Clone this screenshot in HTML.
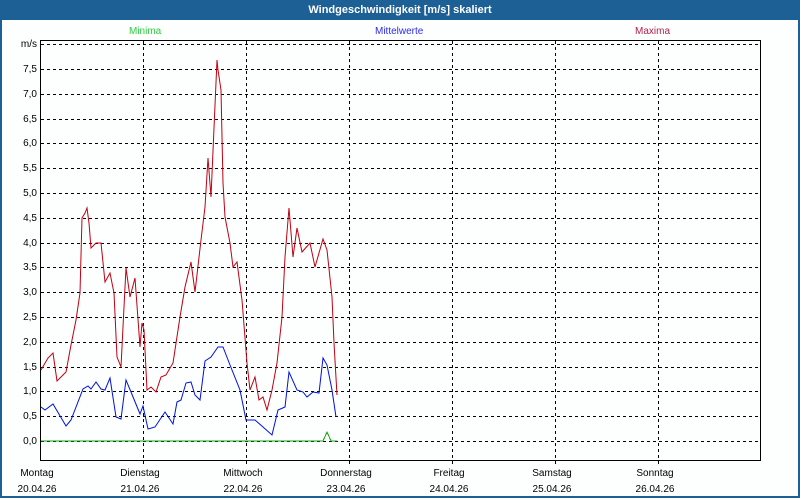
<!DOCTYPE html>
<html><head><meta charset="utf-8"><style>
html,body{margin:0;padding:0}
body{width:800px;height:500px;position:relative;background:#fdfffe;font-family:"Liberation Sans",sans-serif;overflow:hidden}
.frame{position:absolute;left:0;top:0;width:796px;height:496px;border:2px solid #1c6096;border-top:none}
.hdr{position:absolute;left:0;top:0;width:800px;height:20px;background:#1c6096;color:#fff;font-weight:bold;font-size:11px;line-height:20px;text-align:center}
.t{position:absolute;font-size:10px;color:#000;white-space:nowrap}
</style></head><body>
<div class="frame"></div>
<div class="hdr">Windgeschwindigkeit [m/s] skaliert</div>
<div class="t" style="left:129px;top:26px;color:#2ecc40">Minima</div>
<div class="t" style="left:375px;top:26px;color:#2a2af0">Mittelwerte</div>
<div class="t" style="left:635px;top:26px;color:#b0204a">Maxima</div>
<svg width="800" height="500" style="position:absolute;left:0;top:0" shape-rendering="crispEdges">
<g stroke="#000" stroke-width="1" stroke-dasharray="3,3" fill="none" id="grid"></g>
<polyline fill="none" stroke="#1a1" stroke-width="1" points="40,441 323,441 327,432 331,441 337,441"/>
<rect x="40.5" y="40.5" width="720" height="420" fill="none" stroke="#000"/>
<polyline shape-rendering="auto" fill="none" stroke="#c00010" stroke-width="1" points="41,370 48,358 53,353 57,381 66,372 71,345 76,320 80,293 82,218 85,213 87,208 89,223 91,248 96,243 101,243 105,282 110,273 114,293 117,357 121,367 124,307 126,268 130,297 135,278 140,347 142,323 144,330 147,390 151,387 156,392 161,377 166,375 173,363 180,317 185,287 191,262 195,292 201,240 205,207 208,158 211,197 214,128 217,60 218,70 221,90 223,183 225,217 230,243 233,267 237,262 242,300 247,363 250,390 255,377 259,400 263,397 267,410 272,390 277,363 282,317 285,257 289,208 293,257 297,228 302,252 310,243 315,267 323,239 327,250 332,297 334,343 337,395"/>
<polyline shape-rendering="auto" fill="none" stroke="#0010e0" stroke-width="1" points="41,407 45,410 53,404 66,426 71,420 83,389 88,386 91,389 96,382 101,389 105,390 110,378 116,417 121,419 126,380 131,392 140,414 143,406 148,429 155,427 165,412 173,424 177,402 181,400 186,383 191,382 195,395 200,400 205,361 211,357 218,347 223,347 230,365 240,390 246,420 255,420 263,427 272,435 278,410 285,407 289,372 297,390 303,392 307,397 313,392 319,393 323,358 327,365 332,390 336,417"/>
</svg>
<div id="labels"></div>
<script>
var g=document.getElementById('grid'),s='';
for(var k=0;k<=16;k++){var y=Math.round(441-k*24.8)+0.5;s+='<line x1="41" y1="'+y+'" x2="760" y2="'+y+'"/>';}
[143,246,349,452,555,658].forEach(function(x){s+='<line x1="'+(x+0.5)+'" y1="41" x2="'+(x+0.5)+'" y2="466"/>';});
g.innerHTML=s;
var L='',lab=['0,0','0,5','1,0','1,5','2,0','2,5','3,0','3,5','4,0','4,5','5,0','5,5','6,0','6,5','7,0','7,5','m/s'];
for(var k=0;k<=16;k++){var y=Math.round(441-k*24.8);L+='<div class="t" style="right:763px;top:'+(y-5)+'px">'+lab[k]+'</div>';}
var d=[['Montag','20.04.26',37],['Dienstag','21.04.26',140],['Mittwoch','22.04.26',243],['Donnerstag','23.04.26',346],['Freitag','24.04.26',449],['Samstag','25.04.26',552],['Sonntag','26.04.26',655]];
d.forEach(function(a){L+='<div class="t" style="left:'+(a[2]-40)+'px;width:80px;text-align:center;top:468px">'+a[0]+'</div><div class="t" style="left:'+(a[2]-40)+'px;width:80px;text-align:center;top:484px">'+a[1]+'</div>';});
document.getElementById('labels').innerHTML=L;
</script>
</body></html>
